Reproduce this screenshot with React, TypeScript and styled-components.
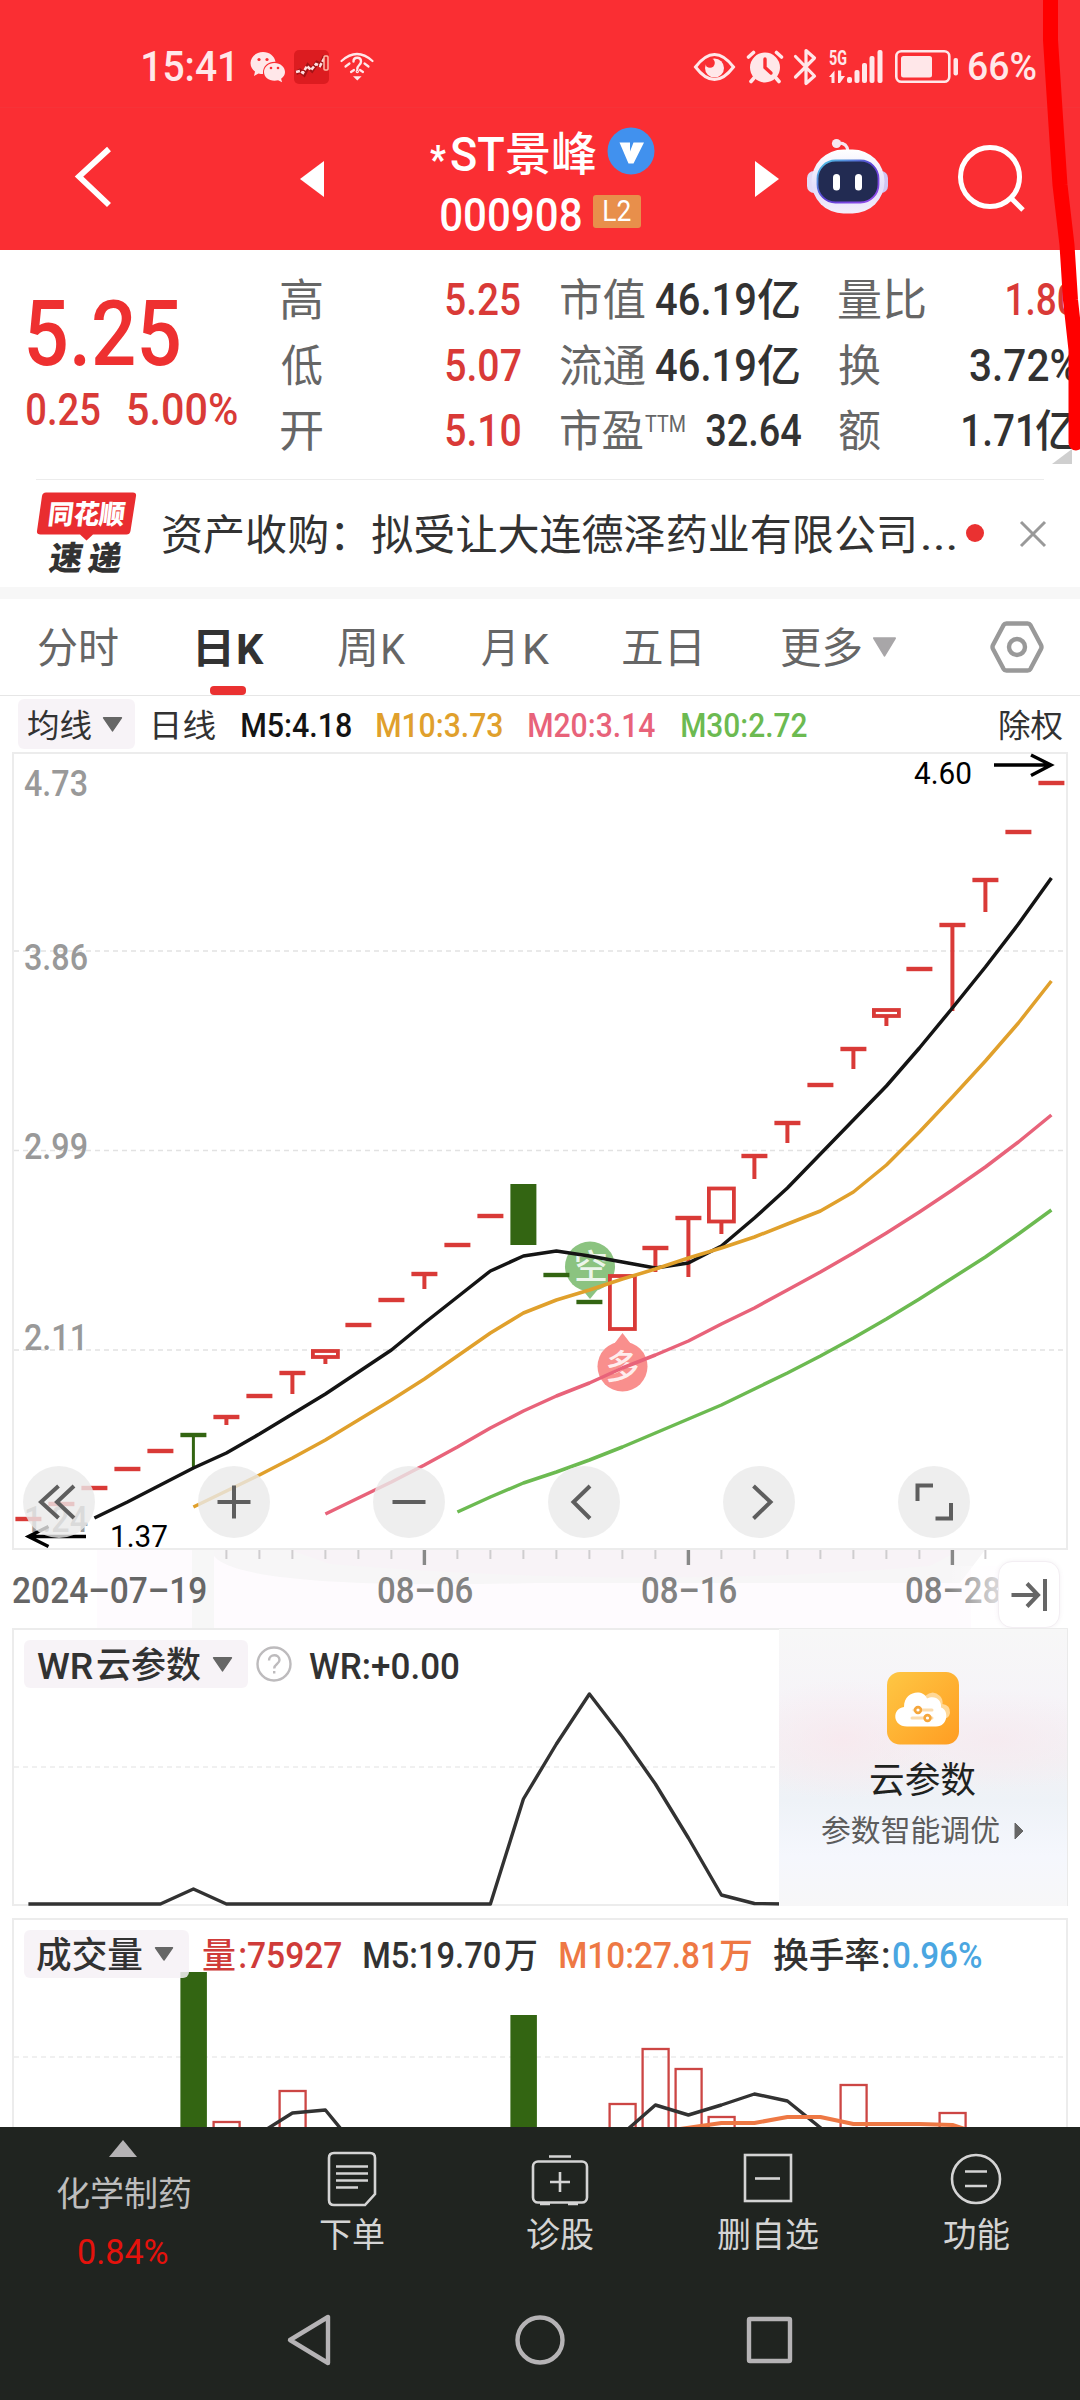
import React, { useLayoutEffect, useState } from 'react';
import styled, { createGlobalStyle } from 'styled-components';

const FONT = 'Roboto, "Noto Sans CJK SC", sans-serif';
const RED = '#d93a37';
const DARK = '#323232';
const GREY = '#666666';

const Global = createGlobalStyle`
  html, body { margin: 0; padding: 0; background: #fff; }
  body { width: 1080px; font-family: ${FONT}; }
  * { box-sizing: border-box; }
  svg { display: block; flex: none; }
`;

/* ---------- text that is fitted to a given ink width ---------- */

const FitBox = styled.span<{ $w: number; $ml: number; $size: number }>`
  flex: none;
  display: block;
  width: ${(p) => p.$w}px;
  margin-left: ${(p) => p.$ml}px;
  height: ${(p) => p.$size}px;
  line-height: ${(p) => p.$size}px;
  font-size: ${(p) => p.$size}px;
`;

const FitInner = styled.span<{ $color: string; $weight: number }>`
  display: inline-block;
  white-space: nowrap;
  transform-origin: 0 50%;
  color: ${(p) => p.$color};
  font-weight: ${(p) => p.$weight};
`;

interface TProps {
  w: number;
  size: number;
  color?: string;
  weight?: number;
  ml?: number;
  dy?: number;
  children: string;
}

function T({ w, size, color = DARK, weight = 400, ml = 0, dy = 0, children }: TProps) {
  const [fit, setFit] = useState({ s: 1, x: 0 });
  useLayoutEffect(() => {
    const ctx = document.createElement('canvas').getContext('2d');
    if (!ctx) return;
    ctx.font = `${weight} ${size}px ${FONT}`;
    const m = ctx.measureText(children);
    const ink = m.actualBoundingBoxLeft + m.actualBoundingBoxRight;
    if (ink > 0) setFit({ s: w / ink, x: (m.actualBoundingBoxLeft * w) / ink });
  }, [children, size, w, weight]);
  return (
    <FitBox $w={w} $ml={ml} $size={size}>
      <FitInner
        $color={color}
        $weight={weight}
        style={{ transform: `translate(${fit.x}px, ${dy}px) scaleX(${fit.s})` }}
      >
        {children}
      </FitInner>
    </FitBox>
  );
}

/* ---------- layout parts ---------- */

const Page = styled.main`
  position: relative;
  width: 1080px;
  height: 2400px;
  overflow: hidden;
  background: #fff;
  display: flex;
  flex-direction: column;
`;

const StatusBar = styled.div`
  height: 108px;
  flex: none;
  padding: 26px 0 0 143px;
  background: #fa2e33;
  display: flex;
  align-items: center;
  border-bottom: 1px solid #f63338;
`;

const Header = styled.header`
  height: 142px;
  flex: none;
  background: #fa2e33;
  display: flex;
  align-items: flex-start;
`;

const TitleBlock = styled.div`
  width: 236px;
  margin-left: 105px;
  padding-top: 17px;
  display: flex;
  flex-direction: column;
`;

const TitleLine = styled.div<{ $h: number; $pl: number }>`
  height: ${(p) => p.$h}px;
  padding-left: ${(p) => p.$pl}px;
  display: flex;
  align-items: center;
`;

const LevelTag = styled.div`
  width: 48px;
  height: 33px;
  margin-left: 12px;
  margin-top: 3px;
  padding-left: 11px;
  border-radius: 3px;
  background: #e88f4b;
  display: flex;
  align-items: center;
`;

const Glyph = styled.svg<{ $ml?: number; $mt?: number }>`
  margin-left: ${(p) => p.$ml ?? 0}px;
  margin-top: ${(p) => p.$mt ?? 0}px;
  overflow: visible;
`;

const Quote = styled.section`
  height: 229px;
  flex: none;
  display: flex;
`;

const PriceCol = styled.div`
  width: 281px;
  padding: 40px 0 0 28px;
`;

const PriceLine = styled.div<{ $h: number }>`
  height: ${(p) => p.$h}px;
  display: flex;
  align-items: center;
`;

const Stats = styled.div`
  padding-top: 17.5px;
  display: flex;
  flex-direction: column;
`;

const StatRow = styled.div`
  height: 65.5px;
  display: flex;
  align-items: center;
`;

const News = styled.section`
  height: 108px;
  flex: none;
  margin: 0 36px;
  border-top: 1px solid #ececec;
  display: flex;
  align-items: center;
`;

const Dot = styled.i`
  flex: none;
  width: 18px;
  height: 18px;
  margin: 0 0 2px 11px;
  border-radius: 50%;
  background: #ea3131;
`;

const Band = styled.div`
  height: 12px;
  flex: none;
  background: #f7f7f7;
`;

const Tabs = styled.nav`
  height: 97px;
  flex: none;
  display: flex;
  align-items: center;
  border-bottom: 1px solid #e6e6e6;
`;

const Tab = styled.div<{ $ml: number; $active?: boolean }>`
  height: 100%;
  margin-left: ${(p) => p.$ml}px;
  display: flex;
  align-items: center;
  position: relative;
  &::after {
    content: '';
    display: ${(p) => (p.$active ? 'block' : 'none')};
    position: absolute;
    left: 13px;
    bottom: 0;
    width: 36px;
    height: 9px;
    border-radius: 4px;
    background: #ea3131;
  }
`;

const IndicatorRow = styled.div`
  height: 56px;
  flex: none;
  padding-left: 18px;
  display: flex;
  align-items: center;
`;

const Chip = styled.div<{ $w: number; $h: number; $pl: number }>`
  flex: none;
  width: ${(p) => p.$w}px;
  height: ${(p) => p.$h}px;
  padding-left: ${(p) => p.$pl}px;
  border-radius: 6px;
  background: rgba(246, 241, 246, 0.85);
  display: flex;
  align-items: center;
`;

const ChartArea = styled.section<{ $h: number }>`
  position: relative;
  flex: none;
  height: ${(p) => p.$h}px;
`;

const KCanvas = styled.svg`
  overflow: visible;
`;

const Controls = styled.div`
  position: absolute;
  left: 23px;
  bottom: 12px;
  display: flex;
  gap: 103px;
`;

const RoundButton = styled.div`
  width: 72px;
  height: 72px;
  border-radius: 50%;
  background: rgba(234, 234, 234, 0.8);
`;

const Axis = styled.div`
  position: relative;
  height: 78px;
  flex: none;
`;

const DateRow = styled.div`
  position: absolute;
  inset: 22px 0 0 13px;
  height: 38px;
  display: flex;
  align-items: center;
`;

const AxisFade = styled.div`
  position: absolute;
  left: 948px;
  top: 16px;
  width: 52px;
  height: 54px;
  background: linear-gradient(90deg, rgba(255, 253, 255, 0), rgba(255, 253, 255, 0.75));
`;

const JumpEnd = styled.div`
  position: absolute;
  left: 998px;
  top: 11px;
  width: 62px;
  height: 67px;
  border-radius: 14px;
  background: #fff;
  border: 1px solid #f3eef3;
  box-shadow: 0 0 4px rgba(120, 90, 120, 0.08);
`;

const PanelHead = styled.div`
  position: absolute;
  left: 24px;
  top: 12px;
  height: 48px;
  display: flex;
  align-items: center;
`;

const CloudCard = styled.aside`
  position: absolute;
  left: 779px;
  top: 1px;
  width: 289px;
  height: 277px;
  border-right: 1px solid #eaeaea;
  background:
    radial-gradient(ellipse 110px 60px at 22% 40%, rgba(249, 230, 236, 0.7), rgba(249, 230, 236, 0)),
    radial-gradient(ellipse 130px 50px at 75% 40%, rgba(247, 232, 238, 0.7), rgba(247, 232, 238, 0)),
    linear-gradient(180deg, #f7f7f7 0%, #f6f4f8 25%, #f2f1f4 48%, #eef2f7 62%, #f5f7fd 82%, #f7f7f8 100%);
  display: flex;
  flex-direction: column;
  align-items: center;
  padding-top: 43px;
`;

const CardLine = styled.div<{ $mt: number }>`
  margin-top: ${(p) => p.$mt}px;
  display: flex;
  align-items: center;
`;

const Spacer = styled.div<{ $h: number }>`
  flex: none;
  height: ${(p) => p.$h}px;
`;

const Dock = styled.footer`
  height: 153px;
  flex: none;
  background: #202420;
  display: flex;
`;

const DockItem = styled.div<{ $w: number; $pt: number; $ml?: number }>`
  width: ${(p) => p.$w}px;
  margin-left: ${(p) => p.$ml ?? 0}px;
  padding-top: ${(p) => p.$pt}px;
  display: flex;
  flex-direction: column;
  align-items: center;
`;

const DockIcon = styled.svg`
  width: 60px;
  height: 60px;
  margin-bottom: 9px;
  fill: none;
  stroke: #d4d4d4;
  stroke-width: 2.6;
`;

const SystemNav = styled.div`
  height: 120px;
  flex: none;
  background: #202420;
  display: flex;
  padding-top: 30px;
  padding-left: 279px;
`;

const NavIcon = styled.svg<{ $ml?: number }>`
  width: 60px;
  height: 60px;
  margin-left: ${(p) => p.$ml ?? 0}px;
  fill: none;
  stroke: #b5b3b5;
  stroke-width: 4.4;
  stroke-linejoin: round;
`;

const Scribble = styled.svg`
  position: absolute;
  left: 0;
  top: 0;
  pointer-events: none;
`;

/* ---------- data ---------- */

const cx = (i: number) => 28.4 + 33 * i;

type Candle = { y: number; low?: number; box?: number; kind?: 'g' | 'solid' };
const candles: Candle[] = [
  { y: 1519 }, { y: 1504 }, { y: 1488 }, { y: 1469 }, { y: 1451 },
  { y: 1435, low: 1468, kind: 'g' }, { y: 1417, low: 1425 }, { y: 1396 },
  { y: 1373, low: 1394 }, { y: 1351, box: 1357, low: 1364 }, { y: 1325 },
  { y: 1300 }, { y: 1274, low: 1289 }, { y: 1245 }, { y: 1216 },
  { y: 1184, box: 1245, kind: 'solid' }, { y: 1275, kind: 'g' }, { y: 1302, kind: 'g' },
  { y: 1276, box: 1329 }, { y: 1248, low: 1272 }, { y: 1218, low: 1277 },
  { y: 1188.5, box: 1221.5, low: 1234 }, { y: 1156, low: 1179 }, { y: 1123, low: 1143 },
  { y: 1085 }, { y: 1049, low: 1069 }, { y: 1010, box: 1016, low: 1026 }, { y: 969 },
  { y: 925, low: 1011 }, { y: 880, low: 912 }, { y: 832 }, { y: 783 },
];

const series: { color: string; from: number; ys: number[] }[] = [
  { color: '#141414', from: 2, ys: [1518, 1502, 1485, 1468, 1453, 1434, 1414, 1394, 1372, 1350, 1323, 1297, 1271, 1256, 1251, 1256, 1262, 1268, 1263, 1246, 1218, 1188, 1154, 1120, 1086, 1048, 1008, 967, 924, 878] },
  { color: '#e0a02c', from: 5, ys: [1507, 1491, 1475, 1458, 1440, 1420, 1400, 1379, 1356, 1333, 1313, 1300, 1290, 1279, 1269, 1258, 1248, 1237, 1224, 1211, 1192, 1165, 1132, 1097, 1061, 1023, 981] },
  { color: '#e8637a', from: 9, ys: [1514, 1498, 1482, 1465, 1447, 1428, 1411, 1396, 1383, 1368, 1355, 1341, 1324, 1308, 1290, 1272, 1253, 1233, 1212, 1190, 1167, 1142, 1115] },
  { color: '#6cba51', from: 13, ys: [1512, 1497, 1483, 1472, 1460, 1447, 1433, 1419, 1405, 1389, 1373, 1356, 1338, 1319, 1299, 1278, 1257, 1234, 1210] },
];

const pts = (from: number, ys: number[]) => ys.map((y, k) => `${cx(from + k)},${y}`).join(' ');

const volumes: { i: number; top: number; green?: boolean }[] = [
  { i: 5, top: 1972, green: true }, { i: 6, top: 2122 }, { i: 8, top: 2091 },
  { i: 15, top: 2015, green: true }, { i: 18, top: 2104 }, { i: 19, top: 2049 },
  { i: 20, top: 2069 }, { i: 21, top: 2117 }, { i: 25, top: 2085 }, { i: 28, top: 2113 },
];

/* ---------- pieces ---------- */

const STATUS = '#ffe7e9';

function StatusIcons() {
  return (
    <>
      <Glyph $ml={19} width="34" height="30" viewBox="251 51 34 30" fill={STATUS}>
        <path d="M263 51c-7 0-12.500 5-12.500 11 0 4 2 6.500 4.500 8.500l-1 4.500 4.500-2.500c1.500.5 3 .6 4.500.6-.5-8 5-12.600 12.500-12.300C274.500 55 269.500 51 263 51z" />
        <path d="M274.500 62c-6 0-10.500 4-10.500 9s4.500 8.700 10.500 8.700c1.200 0 2.500-.2 3.600-.5l4 2-1-3.500c2.500-1.700 3.900-4 3.900-6.700 0-5-4.500-9-10.500-9z" />
        <g fill="#fa2e33">
          <circle cx="259" cy="58.500" r="1.600" /><circle cx="267" cy="58.500" r="1.600" />
          <circle cx="271" cy="67" r="1.300" /><circle cx="278" cy="67" r="1.300" />
        </g>
      </Glyph>
      <Glyph $ml={9} width="35" height="34" viewBox="0 0 35 34">
        <rect width="35" height="34" rx="5" fill="#dc1c20" />
        <path d="M2 23l4-2 4 3 4-8 4 4 5-7 4 2 4-9" fill="none" stroke="#a31215" strokeWidth="4.500" />
        <path d="M2 22l4-1 3 2 4-7 4 4 5-6 4 2 5-9" fill="none" stroke="#ffdfe0" strokeWidth="2.600" strokeDasharray="4 1.500" />
        <rect x="30" y="6" width="4" height="14" rx="1" fill="#e02024" stroke="#ffb9a8" strokeWidth="1.500" />
      </Glyph>
      <Glyph $ml={11} width="34" height="30" viewBox="340 51 34 30" fill="none" stroke={STATUS} strokeWidth="2.200" strokeLinecap="round">
        <path d="M341.500 60q15.500-14 31 0M345.500 65.500l4-3M368.500 65.500l-4-3M351 71l3-2M363 71l-3-2" />
        <path d="M353.500 60.500c0-5 7.500-5 7.500 0 0 3.500-3.700 3.500-3.700 7.500" strokeWidth="2.400" />
        <circle cx="357.300" cy="70.500" r=".6" />
        <path d="M354.800 76h5l-2.500 2.500z" strokeWidth="1.500" fill={STATUS} />
      </Glyph>
      <Glyph $ml={320} width="41" height="30" viewBox="694 50 41 30" fill="none" stroke={STATUS} strokeWidth="3">
        <path d="M695.500 65q19-25 38 0q-19 25-38 0z" />
        <circle cx="714.500" cy="66" r="9.500" fill={STATUS} stroke="none" />
        <circle cx="710" cy="61" r="4.800" fill="#fa2e33" stroke="none" />
      </Glyph>
      <Glyph $ml={12} width="36" height="34" viewBox="747 49 36 34" fill={STATUS}>
        <circle cx="765" cy="66.500" r="15" />
        <g stroke={STATUS} strokeWidth="3.600" strokeLinecap="round">
          <path d="M748.500 56l5-4.500M781.500 56l-5-4.500M754 77l-3 3.500M776 77l3 3.500" />
        </g>
        <path d="M765 58v8.500l6 5.500" fill="none" stroke="#fa2e33" strokeWidth="3.400" strokeLinecap="round" />
      </Glyph>
      <Glyph $ml={11} width="23" height="38" viewBox="794 47 23 38" fill="none" stroke={STATUS} strokeWidth="3.200" strokeLinejoin="round" strokeLinecap="round">
        <path d="M795.500 55.500l19 19.500-8.500 7.500V49.500l8.500 7.500-19 19" />
      </Glyph>
      <Glyph $ml={12} width="54" height="34" viewBox="829 48 54 34" fill={STATUS}>
        <text x="829" y="63" fontFamily="Roboto" fontWeight="700" fontSize="20" textLength="18" lengthAdjust="spacingAndGlyphs">5G</text>
        <path d="M829 75l5.500-6.500V81h-3v-6zM838 68.500h3.200V74H845l-5 7h-2z" />
        <rect x="847" y="75" width="5" height="6" rx="2" />
        <rect x="854.500" y="68" width="5" height="13" rx="2" />
        <rect x="862" y="61" width="5" height="20" rx="2" />
        <rect x="869.500" y="54" width="5" height="27" rx="2" />
        <rect x="877.500" y="48" width="5" height="33" rx="2" />
      </Glyph>
      <Glyph $ml={12} width="64" height="34" viewBox="895 49 64 34">
        <rect x="896.300" y="50.300" width="53" height="30.500" rx="5" fill="none" stroke={STATUS} strokeWidth="2.600" />
        <rect x="901" y="55" width="31" height="21.500" rx="2.500" fill={STATUS} />
        <rect x="953.500" y="57" width="4.500" height="17.500" rx="2" fill={STATUS} />
      </Glyph>
    </>
  );
}

function Robot() {
  return (
    <Glyph $ml={28} $mt={30} width="82" height="76" viewBox="807 138 82 76">
      <defs>
        <linearGradient id="shell" x1="0" y1="0" x2="0" y2="1">
          <stop offset="0" stopColor="#ffffff" /><stop offset=".6" stopColor="#e4defa" /><stop offset="1" stopColor="#f3eefb" />
        </linearGradient>
        <linearGradient id="rim" x1="0" y1="0" x2="1" y2="1">
          <stop offset="0" stopColor="#4fd0e8" /><stop offset=".5" stopColor="#5a3fd0" /><stop offset="1" stopColor="#9a4df0" />
        </linearGradient>
      </defs>
      <path d="M837 143q10-1 11 8" fill="none" stroke="#f6e7f2" strokeWidth="3" />
      <circle cx="836.500" cy="143.500" r="4.600" fill="#f6e7f2" />
      <rect x="807" y="171" width="14" height="22" rx="7" fill="#e2dbf7" />
      <rect x="874" y="171" width="14" height="22" rx="7" fill="#cfc6f2" />
      <rect x="811.500" y="149.500" width="73" height="64" rx="32" fill="url(#shell)" />
      <rect x="817.500" y="160.500" width="61" height="42" rx="18" fill="#222b52" stroke="url(#rim)" strokeWidth="1.800" />
      <rect x="833" y="174" width="7" height="16.500" rx="3.500" fill="#fff" />
      <rect x="855" y="174" width="7" height="16.500" rx="3.500" fill="#fff" />
    </Glyph>
  );
}

function NewsLogo() {
  return (
    <Glyph width="102" height="82" viewBox="36 492.500 102 82">
      <path d="M46 492h87q3.500 0 3 3.500l-5.500 35q-.7 3.500-4 3.500H93l-6.500 6-6.500-6H40.500q-4 0-3.500-3.500l5-35q.6-3.500 4-3.500z" fill="#e92d30" />
      <g fontFamily={FONT} fontWeight="900">
        <text transform="translate(47 523) skewX(-7)" fontSize="27" fill="#fff" textLength="77" lengthAdjust="spacingAndGlyphs">同花顺</text>
        <text transform="translate(48 569) skewX(-9)" fontSize="33" fill={DARK}>速</text>
        <text transform="translate(87 569) skewX(-9)" fontSize="33" fill={DARK}>递</text>
      </g>
    </Glyph>
  );
}

const Caret = ({ ml, w = 21, h = 15, color = GREY }: { ml: number; w?: number; h?: number; color?: string }) => (
  <Glyph $ml={ml} width={w} height={h} viewBox="0 0 20 14" preserveAspectRatio="none">
    <path d="M1.500.8h17L10 13z" fill={color} stroke={color} strokeWidth="1.400" strokeLinejoin="round" />
  </Glyph>
);

function PriceLabel({ y, children }: { y: number; children: string }) {
  return (
    <text x="24" y={y} fontSize="36.500" fontWeight="500" fill="#999" textLength="64" lengthAdjust="spacingAndGlyphs">{children}</text>
  );
}

function KChart() {
  return (
    <KCanvas width="1080" height="798" viewBox="0 752 1080 798" fontFamily={FONT}>
      <rect x="13" y="753" width="1054" height="796" fill="#fff" stroke="#ececec" strokeWidth="2" />
      {[951, 1150.5, 1350].map((y) => (
        <path key={y} d={`M14 ${y}H1066`} stroke="#e2e2e2" strokeWidth="1.400" strokeDasharray="5 4" />
      ))}
      <PriceLabel y={796}>4.73</PriceLabel>
      <PriceLabel y={970}>3.86</PriceLabel>
      <PriceLabel y={1159}>2.99</PriceLabel>
      <PriceLabel y={1350}>2.11</PriceLabel>
      <PriceLabel y={1532}>1.24</PriceLabel>
      <g fill="#8bc380">
        <circle cx="590" cy="1266.500" r="25" /><path d="M580 1287h20l-10 12z" />
      </g>
      <g fill="#f98f8d">
        <circle cx="622.500" cy="1366.500" r="25" /><path d="M612.500 1346h20l-10-13z" />
      </g>
      <g fontSize="34" fontWeight="500" fill="#fff" fillOpacity=".85" textAnchor="middle">
        <text x="591" y="1279">空</text>
        <text x="622.500" y="1379">多</text>
      </g>
      {candles.map((c, i) => {
        const color = c.kind ? '#336512' : RED;
        const x = cx(i);
        if (c.kind === 'solid') return <rect key={i} x={x - 13} y={c.y} width="26" height={(c.box ?? 0) - c.y} fill={color} />;
        return (
          <g key={i} stroke={color} strokeWidth={4.4} fill="none">
            {c.low && <path d={`M${x} ${c.box ?? c.y}V${c.low}`} strokeWidth={c.kind ? 3 : 4} />}
            {c.box ? <rect x={x - 12.5} y={c.y} width="25" height={c.box - c.y} strokeWidth="3.800" /> : <path d={`M${x - 13} ${c.y}H${x + 13}`} />}
          </g>
        );
      })}
      {series.map((s) => (
        <polyline key={s.color} points={pts(s.from, s.ys)} fill="none" stroke={s.color} strokeWidth="3.500" strokeLinejoin="round" />
      ))}
      <g fill="none" stroke="#000" strokeWidth="3.400">
        <path d="M994 765H1050M1031 755l20 10-20 10.500" />
        <path d="M86 1536.500H30M48.500 1526.500l-20 10 20 10" />
      </g>
      <text x="914" y="784" fontSize="31" textLength="58" lengthAdjust="spacingAndGlyphs">4.60</text>
      <text x="110" y="1547" fontSize="30.500" textLength="58" lengthAdjust="spacingAndGlyphs">1.37</text>
    </KCanvas>
  );
}

const controlPaths = [
  'M35.500 20L18 36l17.500 16M51 20L34 36l17 16',
  'M19.500 36h33M36 19.500v33',
  'M19.500 36h33',
  'M42 20L25.500 36 42 52.500',
  'M30.500 20L47.500 36l-17 16.500',
  'M35 19.500H19.500V35M53 37v15.500H37.500',
];

function AxisMarks() {
  return (
    <svg width="1080" height="78" viewBox="0 1550 1080 78">
      <rect x="97" y="1550" width="874" height="78" fill="#fefbfe" />
      <rect x="192" y="1550" width="22" height="78" fill="#f7f7f7" />
      <path d="M214 1550H985L960 1583H540Q240 1590 214 1556z" fill="#f7f6f7" />
      <path d="M290 1550H960L930 1566Q650 1590 330 1564z" fill="#f8f3f7" />
      {Array.from({ length: 24 }, (_, k) => k + 6).map((i) => {
        const major = i === 12 || i === 20 || i === 28;
        return <path key={i} d={`M${cx(i)} 1550V${major ? 1565 : 1559}`} stroke={major ? '#888' : '#cfcdcf'} strokeWidth={major ? 3.4 : 2} />;
      })}
    </svg>
  );
}

function WrChart() {
  const ys = [1904, 1904, 1904, 1904, 1904, 1889, 1904, 1904, 1904, 1904, 1904, 1904, 1904, 1904, 1904, 1799, 1744, 1694, 1737, 1784, 1838, 1895, 1903.5, 1904];
  return (
    <svg width="1080" height="279" viewBox="0 1628 1080 279">
      <rect x="13" y="1629" width="1054" height="276" fill="#fff" stroke="#ececec" strokeWidth="2" />
      <path d="M14 1767H780" stroke="#ebebeb" strokeWidth="1.600" strokeDasharray="5 4" />
      <polyline points={pts(0, ys)} fill="none" stroke="#323232" strokeWidth="3.400" strokeLinejoin="round" />
    </svg>
  );
}

function VolumeChart() {
  return (
    <svg width="1080" height="209" viewBox="0 1918 1080 209">
      <rect x="13" y="1919" width="1054" height="260" fill="#fff" stroke="#ececec" strokeWidth="2" />
      <path d="M14 2057H1066" stroke="#ebebeb" strokeWidth="1.600" strokeDasharray="5 4" />
      {volumes.map((v) =>
        v.green ? (
          <rect key={v.i} x={cx(v.i) - 13} y={v.top} width="26.500" height="200" fill="#336512" />
        ) : (
          <rect key={v.i} x={cx(v.i) - 12.8} y={v.top} width="26" height="200" fill="none" stroke="#cc4644" strokeWidth="2.300" />
        ),
      )}
      <g fill="none" strokeWidth="3.400" strokeLinejoin="round">
        <polyline points={`267,2129 ${cx(8)},2113 ${cx(9)},2110 341,2129`} stroke="#323232" />
        <polyline points={`628,2129 ${cx(19)},2105 ${cx(20)},2115 ${cx(21)},2105 ${cx(22)},2094 ${cx(23)},2101 822,2129`} stroke="#323232" />
        <polyline points={`680,2129 ${cx(21)},2123 ${cx(22)},2123 ${cx(23)},2117 ${cx(24)},2117 ${cx(25)},2124 ${cx(27)},2124 ${cx(28)},2125 968,2130`} stroke="#ee7844" strokeWidth="4" />
      </g>
    </svg>
  );
}

/* ---------- screen ---------- */

export default function App() {
  return (
    <Page>
      <Global />
      <StatusBar>
        <T w={89} size={42} weight={500} color={STATUS}>15:41</T>
        <StatusIcons />
        <T ml={10} w={67} size={38} weight={500} color={STATUS}>66%</T>
      </StatusBar>

      <Header>
        <Glyph $ml={72} $mt={38} width="42" height="64" viewBox="72 146 42 64">
          <path d="M109 149L79 176.500l30 28.500" fill="none" stroke="#fff" strokeWidth="5.800" />
        </Glyph>
        <Glyph $ml={186} $mt={53} width="24" height="36" viewBox="0 0 24 36">
          <path d="M24 0v36L0 18z" fill="#fff" />
        </Glyph>
        <TitleBlock>
          <TitleLine $h={52} $pl={1}>
            <T w={16} size={38} weight={900} color="#fff" dy={9}>*</T>
            <T ml={5} w={53} size={49} weight={500} color="#fff" dy={3}>ST</T>
            <T ml={2} w={90} size={46} weight={500} color="#fff" dy={3}>景峰</T>
            <Glyph $ml={11} width="48" height="48" viewBox="0 0 48 48">
              <circle cx="24" cy="24" r="23.500" fill="#4191ee" />
              <path d="M12.500 15.500h10.500v9l3.500-9h10.500L26.500 36.500h-5z" fill="#fff" />
            </Glyph>
          </TitleLine>
          <TitleLine $h={66} $pl={12}>
            <T w={140} size={47} weight={500} color="#fff" dy={4}>000908</T>
            <LevelTag>
              <T w={27} size={29} color="#fff">L2</T>
            </LevelTag>
          </TitleLine>
        </TitleBlock>
        <Glyph $ml={90} $mt={53} width="24" height="36" viewBox="0 0 24 36">
          <path d="M0 0v36l24-18z" fill="#fff" />
        </Glyph>
        <Robot />
        <Glyph $ml={68} $mt={36} width="70" height="70" viewBox="957 144 70 70" fill="none" stroke="#fff" strokeWidth="5">
          <circle cx="990" cy="177" r="29.500" /><path d="M1011 198l12 12" />
        </Glyph>
      </Header>

      <Quote>
        <PriceCol>
          <PriceLine $h={90}><T w={151} size={90} weight={500} color="#ee3030">5.25</T></PriceLine>
          <PriceLine $h={60}>
            <T ml={-1} w={73} size={44} weight={500} color={RED}>0.25</T>
            <T ml={28} w={109} size={44} weight={500} color={RED}>5.00%</T>
          </PriceLine>
        </PriceCol>
        <Stats>
          <StatRow>
            <T w={41} size={44} color={GREY} dy={1}>高</T>
            <T ml={124} w={74} size={44} weight={500} color={RED}>5.25</T>
            <T ml={41} w={84} size={44} color={GREY} dy={1}>市值</T>
            <T ml={11} w={99} size={44} weight={500}>46.19</T>
            <T ml={3} w={41} size={44} weight={500} dy={1}>亿</T>
            <T ml={40} w={86} size={44} color={GREY} dy={1}>量比</T>
            <T ml={82} w={69} size={44} weight={500} color={RED}>1.80</T>
          </StatRow>
          <StatRow>
            <T w={41} size={44} color={GREY} dy={1}>低</T>
            <T ml={124} w={75} size={44} weight={500} color={RED}>5.07</T>
            <T ml={39} w={85} size={44} color={GREY} dy={1}>流通</T>
            <T ml={11} w={99} size={44} weight={500}>46.19</T>
            <T ml={3} w={41} size={44} weight={500} dy={1}>亿</T>
            <T ml={40} w={41} size={44} color={GREY} dy={1}>换</T>
            <T ml={90} w={108} size={44} weight={500}>3.72%</T>
          </StatRow>
          <StatRow>
            <T w={41} size={44} color={GREY} dy={1}>开</T>
            <T ml={124} w={74} size={44} weight={500} color={RED}>5.10</T>
            <T ml={41} w={82} size={44} color={GREY} dy={1}>市盈</T>
            <T ml={2} w={40} size={23} weight={400} color={GREY} dy={-7}>TTM</T>
            <T ml={21} w={95} size={44} weight={500}>32.64</T>
            <T ml={38} w={41} size={44} color={GREY} dy={1}>额</T>
            <T ml={83} w={67} size={44} weight={500}>1.71</T>
            <T ml={6} w={40} size={44} weight={500} dy={1}>亿</T>
          </StatRow>
        </Stats>
      </Quote>

      <News>
        <NewsLogo />
        <T ml={25} w={751} size={42} dy={2}>资产收购：拟受让大连德泽药业有限公司</T>
        <T ml={8} w={33} size={42} dy={2}>...</T>
        <Dot />
        <Glyph $ml={36} width="26" height="26" viewBox="0 0 26 26">
          <path d="M1 1l24 24M25 1L1 25" stroke="#999" strokeWidth="3" />
        </Glyph>
      </News>
      <Band />

      <Tabs>
        <Tab $ml={38}><T w={80} size={42} color={GREY} dy={2}>分时</T></Tab>
        <Tab $ml={79} $active>
          <T ml={1} w={31} size={42} weight={700} dy={2}>日</T>
          <T ml={9} w={26} size={43} weight={700} dy={2}>K</T>
        </Tab>
        <Tab $ml={74}>
          <T w={36} size={42} color={GREY} dy={2}>周</T>
          <T ml={9} w={22} size={43} color={GREY} dy={2}>K</T>
        </Tab>
        <Tab $ml={77}>
          <T w={31} size={42} color={GREY} dy={2}>月</T>
          <T ml={12} w={24} size={43} color={GREY} dy={2}>K</T>
        </Tab>
        <Tab $ml={74}><T w={76} size={42} color={GREY} dy={2}>五日</T></Tab>
        <Tab $ml={82}>
          <T w={80} size={42} color={GREY} dy={2}>更多</T>
          <Caret ml={11} w={25} h={20} color="#a8a6a8" />
        </Tab>
        <Glyph $ml={93} width="54" height="52" viewBox="0 0 54 52" fill="none" stroke="#999" strokeWidth="4.400" strokeLinejoin="round">
          <path d="M16.500 2.500h21q2 0 3 1.700L51 24q1 2 0 4L40.500 47.800q-1 1.700-3 1.700h-21q-2 0-3-1.700L3 28q-1-2 0-4L13.500 4.200q1-1.700 3-1.700z" />
          <circle cx="27" cy="26" r="8" />
        </Glyph>
      </Tabs>

      <IndicatorRow>
        <Chip $w={117} $h={50} $pl={10}>
          <T w={63} size={32} dy={2}>均线</T>
          <Caret ml={11} />
        </Chip>
        <T ml={19} w={61} size={32} dy={2}>日线</T>
        <T ml={27} w={109} size={32.5} weight={500} color="#141414" dy={2}>M5:4.18</T>
        <T ml={26} w={125} size={32.5} weight={500} color="#e0a02c" dy={2}>M10:3.73</T>
        <T ml={27} w={126} size={32.5} weight={500} color="#e8637a" dy={2}>M20:3.14</T>
        <T ml={27} w={125} size={32.5} weight={500} color="#6cba51" dy={2}>M30:2.72</T>
        <T ml={193} w={62} size={32} dy={2}>除权</T>
      </IndicatorRow>

      <ChartArea $h={798}>
        <KChart />
        <Controls>
          {controlPaths.map((d) => (
            <RoundButton key={d}>
              <svg width="72" height="72" viewBox="0 0 72 72" fill="none" stroke="#5e5e5e" strokeWidth="4"><path d={d} /></svg>
            </RoundButton>
          ))}
        </Controls>
      </ChartArea>

      <Axis>
        <AxisMarks />
        <DateRow>
          <T w={193} size={36} weight={500} color={GREY}>2024–07–19</T>
          <T ml={172} w={94} size={36} weight={500} color="#828282">08–06</T>
          <T ml={170} w={94} size={36} weight={500} color="#828282">08–16</T>
          <T ml={170} w={94} size={36} weight={500} color="#828282">08–28</T>
        </DateRow>
        <AxisFade />
        <JumpEnd>
          <svg width="60" height="65" viewBox="999 1562 60 65" fill="none" stroke="#666" strokeWidth="4">
            <path d="M1011.500 1595H1037M1027 1583.500l11 11.500-11 11.500M1045 1579v32" />
          </svg>
        </JumpEnd>
      </Axis>

      <ChartArea $h={279}>
        <WrChart />
        <PanelHead>
          <Chip $w={224} $h={48} $pl={13}>
            <T w={56} size={37} weight={500} dy={2}>WR</T>
            <T ml={4} w={104} size={36} weight={500} dy={2}>云参数</T>
            <Caret ml={11} />
          </Chip>
          <Glyph $ml={8} width="36" height="36" viewBox="0 0 36 36" fill="none" stroke="#bdbbbd" strokeWidth="2.400">
            <circle cx="18" cy="18" r="16.500" />
            <path d="M13 14.500c0-7 10.500-7 10.500-.5 0 4-5.300 4-5.300 8.500M18.200 25v2.600" />
          </Glyph>
          <T ml={17} w={150} size={37} weight={500} dy={2}>WR:+0.00</T>
        </PanelHead>
        <CloudCard>
          <svg width="72" height="73" viewBox="0 0 72 73">
            <defs>
              <linearGradient id="amber" x1="0" y1="0" x2="1" y2="1">
                <stop offset="0" stopColor="#fec744" /><stop offset="1" stopColor="#ff9d22" />
              </linearGradient>
            </defs>
            <rect width="72" height="72.500" rx="13" fill="url(#amber)" />
            <path d="M38 24q8-7 15 0 3 3 2.500 8 8 1 7.500 9-1 6-8 6H36z" fill="#ffd897" />
            <path d="M20 54.500c-15 0-15-18.500-3-19.500 0-16 19-18.500 23-8.500 8-4 15 1.500 14 9 8 2 7.500 19-5 19z" fill="#fff" />
            <g stroke="#fbdcae" strokeWidth="3" strokeLinecap="round"><path d="M27 38h18M25 46h20" /></g>
            <g fill="#fff" stroke="#f5a63c" strokeWidth="2.600"><circle cx="31" cy="38" r="2.900" /><circle cx="40.500" cy="46" r="2.900" /></g>
          </svg>
          <CardLine $mt={17}><T w={104} size={36} color="#1f221f" dy={1}>云参数</T></CardLine>
          <CardLine $mt={18}>
            <T w={177} size={30} color="#5c5c5c">参数智能调优</T>
            <Glyph $ml={15} width="10" height="18" viewBox="0 0 10 18">
              <path d="M1 1v16l8-8z" fill={GREY} stroke={GREY} strokeLinejoin="round" />
            </Glyph>
          </CardLine>
        </CloudCard>
      </ChartArea>

      <Spacer $h={11} />
      <ChartArea $h={209}>
        <VolumeChart />
        <PanelHead>
          <Chip $w={165} $h={48} $pl={13}>
            <T w={105} size={36} weight={500} dy={2}>成交量</T>
            <Caret ml={12} w={20} h={14} />
          </Chip>
          <T ml={14} w={32} size={35} weight={500} color="#cf3b39" dy={2}>量</T>
          <T ml={5} w={101} size={36} weight={500} color="#cf3b39" dy={2}>:75927</T>
          <T ml={23} w={136} size={36} weight={500} dy={2}>M5:19.70</T>
          <T ml={4} w={32} size={35} weight={500} dy={2}>万</T>
          <T ml={24} w={153} size={36} weight={500} color="#ee7844" dy={2}>M10:27.81</T>
          <T ml={6} w={32} size={35} weight={500} color="#ee7844" dy={2}>万</T>
          <T ml={23} w={105} size={35} weight={500} dy={2}>换手率</T>
          <T ml={4} w={6} size={36} weight={500} dy={2}>:</T>
          <T ml={4} w={88} size={36} weight={500} color="#4aa6e1" dy={2}>0.96%</T>
        </PanelHead>
      </ChartArea>

      <Dock>
        <DockItem $w={134} $pt={13} $ml={56}>
          <svg width="28" height="17" viewBox="0 0 28 17"><path d="M14 0l14 17H0z" fill="#b5b3b5" /></svg>
          <Spacer $h={20} />
          <T w={133} size={34} color="#bdbdbd">化学制药</T>
          <Spacer $h={24} />
          <T w={90} size={35} color="#e5120c">0.84%</T>
        </DockItem>
        <DockItem $w={120} $pt={22} $ml={102}>
          <DockIcon viewBox="322 2149 60 60">
            <path d="M334 2153h36q5 0 5 5v36l-10 11h-31q-5 0-5-5v-42q0-5 5-5z" />
            <path d="M336 2166.500h32M336 2173.500h32M336 2180.500h32M336 2187.500h22" />
          </DockIcon>
          <T w={64} size={34} color="#d4d4d4">下单</T>
        </DockItem>
        <DockItem $w={120} $pt={22} $ml={88}>
          <DockIcon viewBox="530 2149 60 60">
            <rect x="533" y="2161.500" width="54" height="41" rx="5" />
            <path d="M549 2156.500h22M560 2172v20M550 2182h20M540 2204h10M568 2204h10" />
          </DockIcon>
          <T w={66} size={34} color="#d4d4d4">诊股</T>
        </DockItem>
        <DockItem $w={120} $pt={22} $ml={88}>
          <DockIcon viewBox="738 2149 60 60">
            <rect x="745" y="2155" width="46" height="46" /><path d="M755 2178.500h25" />
          </DockIcon>
          <T w={100} size={34} color="#d4d4d4">删自选</T>
        </DockItem>
        <DockItem $w={120} $pt={22} $ml={88}>
          <DockIcon viewBox="946 2149 60 60">
            <circle cx="976" cy="2179" r="24" /><path d="M965 2171.500h22M965 2186h22" />
          </DockIcon>
          <T w={65} size={34} color="#d4d4d4">功能</T>
        </DockItem>
      </Dock>

      <SystemNav>
        <NavIcon viewBox="279 2310 60 60"><path d="M328 2317v46L290 2340z" /></NavIcon>
        <NavIcon $ml={171} viewBox="510 2310 60 60"><circle cx="540" cy="2340" r="22.500" /></NavIcon>
        <NavIcon $ml={169} viewBox="739 2310 60 60"><rect x="749" y="2319" width="41" height="42" rx="1" /></NavIcon>
      </SystemNav>

      <Scribble width="1080" height="470" viewBox="0 0 1080 470">
        <path d="M1072 449v15h-20z" fill="#cfcfcf" />
        <path d="M1050.500-10V40L1056 125 1060 185 1067 245 1070.500 300 1076 350V443" fill="none" stroke="#f00" strokeWidth="15" strokeLinecap="round" strokeLinejoin="round" />
      </Scribble>
    </Page>
  );
}
